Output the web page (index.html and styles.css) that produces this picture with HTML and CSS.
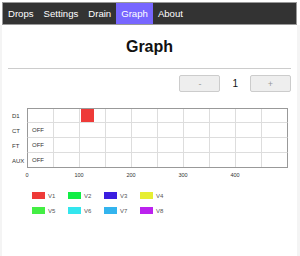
FILE: index.html
```html
<!DOCTYPE html>
<html lang="en">
<head>
  <meta charset="UTF-8">
  <meta name="viewport" content="width=device-width, initial-scale=1.0">
  <title>Graph</title>
  <link rel="stylesheet" href="styles.css">
</head>
<body>
  <nav class="tabs">
    <a href="#">Drops</a>
    <a href="#">Settings</a>
    <a href="#">Drain</a>
    <a href="#" class="active">Graph</a>
    <a href="#">About</a>
  </nav>

  <main class="page">
    <h1>Graph</h1>
    <hr>

    <div class="pager">
      <button>-</button>
      <span class="page-num">1</span>
      <button>+</button>
    </div>

    <div class="chart">
      <div class="row">
        <div class="label">D1</div>
        <div class="track">
          <div class="bar" style="left: 53px; width: 13px; background: #ee3a38;"></div>
        </div>
      </div>
      <div class="row">
        <div class="label">CT</div>
        <div class="track"><span class="state">OFF</span></div>
      </div>
      <div class="row">
        <div class="label">FT</div>
        <div class="track"><span class="state">OFF</span></div>
      </div>
      <div class="row">
        <div class="label">AUX</div>
        <div class="track"><span class="state">OFF</span></div>
      </div>
    </div>

    <div class="axis">
      <span>0</span>
      <span>100</span>
      <span>200</span>
      <span>300</span>
      <span>400</span>
    </div>

    <div class="legend">
      <div class="item"><i style="background: #ee3a38;"></i>V1</div>
      <div class="item"><i style="background: #11ee44;"></i>V2</div>
      <div class="item"><i style="background: #3a1ee0;"></i>V3</div>
      <div class="item"><i style="background: #e6ee33;"></i>V4</div>
      <div class="item"><i style="background: #44ee44;"></i>V5</div>
      <div class="item"><i style="background: #33e6ee;"></i>V6</div>
      <div class="item"><i style="background: #33b4ee;"></i>V7</div>
      <div class="item"><i style="background: #bb22ee;"></i>V8</div>
    </div>
  </main>
</body>
</html>
```

FILE: styles.css
```css
* {
  margin: 0;
  padding: 0;
  box-sizing: border-box;
}

body {
  font-family: "Liberation Sans", Arial, sans-serif;
  background-color: #fff;
  color: #111;
  padding-top: 2px;
}

.tabs {
  display: flex;
  margin: 0 3px 0 2px;
  height: 23px;
  background-color: #333;
  border: 1px solid #999;
}

.tabs a {
  display: flex;
  align-items: center;
  padding: 0 5px;
  color: #fff;
  font-size: 9.6px;
  text-decoration: none;
}

.tabs a.active {
  background-color: #7766ff;
}

.page {
  min-height: 231px;
  border-left: 2px solid #f4f4f4;
  border-right: 3px solid #f4f4f4;
  padding: 0 6px;
}

h1 {
  font-size: 16px;
  font-weight: 700;
  text-align: center;
  padding-top: 13px;
  line-height: 18px;
}

hr {
  border: none;
  border-top: 1px solid #ccc;
  margin-top: 12px;
}

.pager {
  display: flex;
  justify-content: flex-end;
  align-items: center;
  gap: 12px;
  margin-top: 6px;
}

.pager button {
  width: 41px;
  height: 17px;
  background-color: #eee;
  border: 1px solid #ccc;
  border-radius: 2px;
  color: #999;
  font-family: inherit;
  font-size: 9px;
}

.page-num {
  font-size: 10px;
}

.chart {
  margin-top: 16px;
}

.row {
  display: flex;
  height: 15px;
}

.label {
  width: 19px;
  font-size: 6px;
  color: #333;
  display: flex;
  align-items: center;
  padding-left: 4px;
}

.track {
  position: relative;
  width: 261px;
  border-left: 1px solid #999;
  border-right: 1px solid #999;
  border-bottom: 1px solid #ddd;
  background-image: repeating-linear-gradient(to right, transparent 0, transparent 25px, #ddd 25px, #ddd 26px);
  display: flex;
  align-items: center;
}

.row:first-child .track {
  border-top: 1px solid #999;
}

.row:last-child .track {
  border-bottom: 1px solid #999;
}

.bar {
  position: absolute;
  top: 0;
  bottom: 0;
}

.state {
  font-size: 6px;
  color: #333;
  padding-left: 4px;
}

.axis {
  display: flex;
  margin-left: 19px;
  margin-top: 4px;
  font-size: 5.5px;
  color: #333;
}

.axis span {
  width: 52px;
  text-align: center;
}

.axis span:first-child {
  margin-left: -26px;
}

.legend {
  display: grid;
  grid-template-columns: repeat(4, 36px);
  row-gap: 8px;
  margin: 14px 0 0 24px;
}

.legend .item {
  display: flex;
  align-items: center;
  gap: 3px;
  font-size: 6px;
  color: #555;
}

.legend i {
  width: 13px;
  height: 7px;
}
```
